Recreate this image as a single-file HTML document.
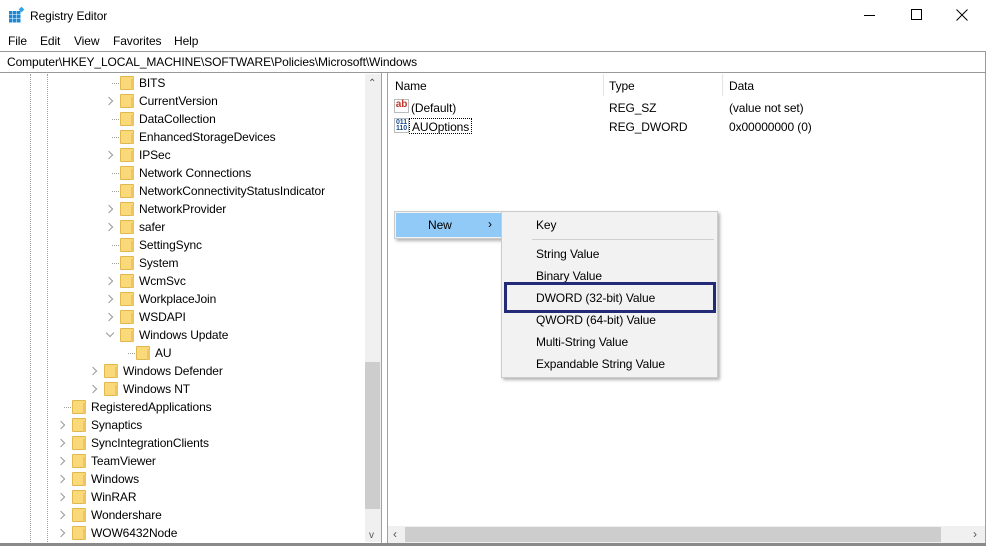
<!DOCTYPE html>
<html><head><meta charset="utf-8">
<style>
*{margin:0;padding:0;box-sizing:border-box}
body{width:986px;height:546px;overflow:hidden;background:#fff;font-family:"Liberation Sans",sans-serif;font-size:12px;color:#000;position:relative;letter-spacing:-0.1px}
.a{position:absolute;white-space:nowrap}
.f{position:absolute;width:14px;height:14px;background:#f9d979;border:1px solid #e0b84c;border-radius:1px}
.f:after{content:"";position:absolute;right:-1px;top:2px;width:3px;height:11px;background:#eec565}
.ch{position:absolute;width:6px;height:6px;border-right:1px solid #999;border-bottom:1px solid #999;transform:rotate(-45deg)}
.dv{position:absolute;width:0;border-left:1px dotted #a0a0a0}
.dh{position:absolute;height:0;border-top:1px dotted #a0a0a0}
</style></head><body>
<svg class="a" style="left:8px;top:7px" width="17" height="17" viewBox="0 0 17 17">
<g fill="#1e88d6"><rect x="1" y="4" width="3.5" height="3.5"/><rect x="5" y="4" width="3.5" height="3.5"/><rect x="9" y="4" width="3.5" height="3.5"/>
<rect x="1" y="8" width="3.5" height="3.5"/><rect x="5" y="8" width="3.5" height="3.5"/><rect x="9" y="8" width="3.5" height="3.5"/>
<rect x="1" y="12" width="3.5" height="3.5"/><rect x="5" y="12" width="3.5" height="3.5"/><rect x="9" y="12" width="3.5" height="3.5"/></g>
<rect x="11.5" y="0.5" width="4" height="4" fill="#2aa8e8" transform="rotate(45 13.5 2.5)"/></svg>
<div class="a" style="left:30px;top:9px;font-size:12px">Registry Editor</div>
<div class="a" style="left:864px;top:15px;width:11px;height:1px;background:#000"></div>
<div class="a" style="left:911px;top:9px;width:11px;height:11px;border:1px solid #000"></div>
<svg class="a" style="left:956px;top:9px" width="12" height="12" viewBox="0 0 12 12"><path d="M0.5 0.5L11.5 11.5M11.5 0.5L0.5 11.5" stroke="#000" stroke-width="1"/></svg>
<div class="a" style="left:8px;top:34px">File</div>
<div class="a" style="left:40px;top:34px">Edit</div>
<div class="a" style="left:74px;top:34px">View</div>
<div class="a" style="left:113px;top:34px">Favorites</div>
<div class="a" style="left:174px;top:34px">Help</div>
<div class="a" style="left:0;top:51px;width:986px;height:22px;border-top:1px solid #999;border-bottom:1px solid #999;border-right:1px solid #999"></div>
<div class="a" style="left:7px;top:55px">Computer\HKEY_LOCAL_MACHINE\SOFTWARE\Policies\Microsoft\Windows</div>
<div class="a" style="left:0;top:73px;width:382px;height:471px;border-right:1px solid #a0a0a0"></div>
<div class="a" style="left:365px;top:74px;width:16px;height:468px;background:#f0f0f0"></div>
<div class="a" style="left:365px;top:362px;width:15px;height:147px;background:#cdcdcd"></div>
<div class="a" style="left:368px;top:78px;font-size:10px;color:#555">&#8963;</div>
<div class="a" style="left:369px;top:530px;font-size:10px;color:#555">v</div>
<div class="dv" style="left:30px;top:74px;height:468px"></div>
<div class="dv" style="left:47px;top:74px;height:468px"></div>

<div id="tree"></div>
<div class="a" style="left:387px;top:73px;width:599px;height:471px;border-left:1px solid #a0a0a0;border-right:1px solid #a0a0a0"></div>
<div class="a" style="left:395px;top:79px">Name</div>
<div class="a" style="left:603px;top:74px;width:1px;height:22px;background:#e5e5e5"></div>
<div class="a" style="left:609px;top:79px">Type</div>
<div class="a" style="left:722px;top:74px;width:1px;height:22px;background:#e5e5e5"></div>
<div class="a" style="left:729px;top:79px">Data</div>
<div class="a" style="left:394px;top:99px;width:15px;height:14px;border:1px solid #bbb;background:#fff;color:#c0392b;font-size:10px;font-weight:bold;line-height:10px;text-align:center">ab</div>
<div class="a" style="left:411px;top:101px">(Default)</div>
<div class="a" style="left:609px;top:101px">REG_SZ</div>
<div class="a" style="left:729px;top:101px">(value not set)</div>
<div class="a" style="left:394px;top:118px;width:15px;height:15px;border:1px solid #bbb;background:#fff;color:#1a4d8f;font-size:7px;font-weight:bold;line-height:6px;text-align:center;padding-top:1px">011<br>110</div>
<div class="a" style="left:409px;top:118px;height:16px;border:1px dotted #000;padding:1px 2px">AUOptions</div>
<div class="a" style="left:609px;top:120px">REG_DWORD</div>
<div class="a" style="left:729px;top:120px">0x00000000 (0)</div>
<div class="a" style="left:388px;top:526px;width:597px;height:17px;background:#f0f0f0"></div>
<div class="a" style="left:405px;top:527px;width:536px;height:15px;background:#cdcdcd"></div>
<div class="a" style="left:393px;top:527px;color:#555;font-size:12px">&lsaquo;</div>
<div class="a" style="left:973px;top:527px;color:#555;font-size:12px">&rsaquo;</div>
<div class="a" style="left:0;top:543px;width:986px;height:3px;background:#8a8a8a"></div>
<div class="a" style="left:394px;top:211px;width:110px;height:28px;background:#f2f2f2;border:1px solid #ccc;box-shadow:2px 2px 3px rgba(0,0,0,.3)"></div>
<div class="a" style="left:396px;top:213px;width:106px;height:24px;background:#91c9f7"></div>
<div class="a" style="left:428px;top:218px">New</div>
<div class="a" style="left:488px;top:217px;font-size:12px">&rsaquo;</div>
<div class="a" style="left:501px;top:211px;width:217px;height:167px;background:#f2f2f2;border:1px solid #ccc;box-shadow:2px 2px 3px rgba(0,0,0,.3)"></div>
<div class="a" style="left:536px;top:218px">Key</div>
<div class="a" style="left:532px;top:239px;width:182px;height:1px;background:#d0d0d0"></div>
<div class="a" style="left:536px;top:247px">String Value</div>
<div class="a" style="left:536px;top:269px">Binary Value</div>
<div class="a" style="left:504px;top:282px;width:212px;height:31px;border:3px solid #232a78"></div>
<div class="a" style="left:536px;top:291px">DWORD (32-bit) Value</div>
<div class="a" style="left:536px;top:313px">QWORD (64-bit) Value</div>
<div class="a" style="left:536px;top:335px">Multi-String Value</div>
<div class="a" style="left:536px;top:357px">Expandable String Value</div>
<script>
var items=[
["BITS",3,0],["CurrentVersion",3,1],["DataCollection",3,0],["EnhancedStorageDevices",3,0],["IPSec",3,1],
["Network Connections",3,0],["NetworkConnectivityStatusIndicator",3,0],["NetworkProvider",3,1],["safer",3,1],
["SettingSync",3,0],["System",3,0],["WcmSvc",3,1],["WorkplaceJoin",3,1],["WSDAPI",3,1],["Windows Update",3,2],
["AU",4,0],["Windows Defender",2,1],["Windows NT",2,1],["RegisteredApplications",1,0],["Synaptics",1,1],
["SyncIntegrationClients",1,1],["TeamViewer",1,1],["Windows",1,1],["WinRAR",1,1],["Wondershare",1,1],["WOW6432Node",1,1]];
var fx={1:72,2:104,3:120,4:136},h="";
items.forEach(function(it,i){
 var y=76+i*18,x=fx[it[1]];
 h+='<div class="f" style="left:'+x+'px;top:'+y+'px"></div>';
 h+='<div class="a" style="left:'+(x+19)+'px;top:'+(y)+'px">'+it[0]+'</div>';
 if(it[2]==1)h+='<div class="ch" style="left:'+(x-14)+'px;top:'+(y+4)+'px"></div>';
 else if(it[2]==2)h+='<div class="ch" style="left:'+(x-13)+'px;top:'+(y+2)+'px;transform:rotate(45deg)"></div>';
 else h+='<div class="dh" style="left:'+(x-8)+'px;top:'+(y+7)+'px;width:7px"></div>';
});
document.getElementById("tree").innerHTML=h;
</script>
</body></html>
